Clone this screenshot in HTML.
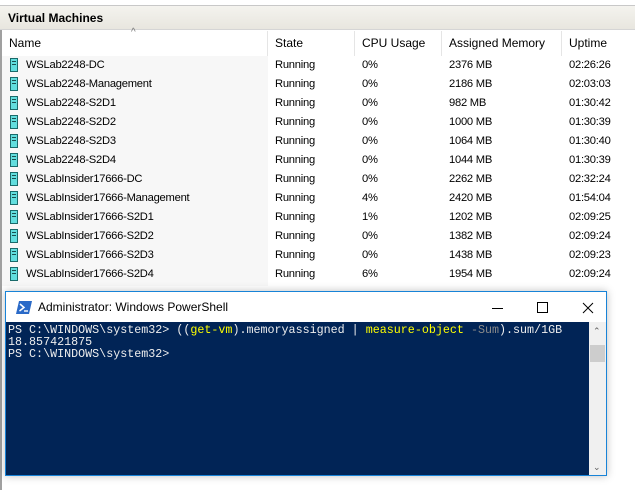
<!DOCTYPE html>
<html><head><style>
*{margin:0;padding:0;box-sizing:border-box}
body{width:635px;height:489px;background:#fff;position:relative;overflow:hidden;font-family:"Liberation Sans",sans-serif;font-size:12px;color:#000}
.top{position:absolute;left:0;top:0;width:635px;height:6px;background:#fff;border-bottom:1px solid #c8c8c8}
.title{position:absolute;left:0;top:6px;width:635px;height:24px;background:linear-gradient(#f4f3ee,#e8e6df);border-bottom:1px solid #d5d5d5;font-weight:bold;padding:5px 0 0 8px;font-size:12px}
.lb{position:absolute;left:0;top:30px;width:2px;height:460px;background:#a0a0a0}
.namebg{position:absolute;left:2px;top:56px;width:266px;height:230px;background:#f7f7f7}
.hdr{position:absolute;top:31px;height:25px;padding:5px 0 0 7px;font-size:12px;border-right:1px solid #e5e5e5}
.row{position:absolute;left:0;width:635px;height:19px;font-size:11.2px;letter-spacing:-0.25px}
.row span{position:absolute;top:3px}
.ic{position:absolute;left:10px;top:2px;width:8px;height:14px;background:#62dede;border:1px solid #1a6a6a}
.ic:before{content:"";position:absolute;left:1px;top:2px;width:4px;height:1px;background:#1a5050;box-shadow:0 3px 0 #1a5050}
.win{position:absolute;left:5px;top:291px;width:602px;height:185px;border:1px solid #1883d7;background:#fff;box-shadow:0 0 8px rgba(0,0,0,.25)}
.wt{position:absolute;left:0;top:0;width:600px;height:30px;font-size:12px}
.con{position:absolute;left:0;top:30px;width:583px;height:153px;background:#012456;font-family:"Liberation Mono",monospace;font-size:11.7px;color:#eee;line-height:12px;padding:2px 0 0 2px;white-space:pre}
.sb{position:absolute;left:583px;top:30px;width:17px;height:153px;background:#f0f0f0}
.y{color:#ffff00}.g{color:#8a8a8a}
</style></head><body>
<div class="top"></div>
<div class="title">Virtual Machines</div>
<div class="lb"></div>
<div class="namebg"></div>
<div class="hdr" style="left:2px;width:266px">Name</div>
<div style="position:absolute;left:131px;top:27px;font-size:10px;color:#777">^</div>
<div class="hdr" style="left:268px;width:87px">State</div>
<div class="hdr" style="left:355px;width:87px">CPU Usage</div>
<div class="hdr" style="left:442px;width:120px">Assigned Memory</div>
<div class="hdr" style="left:562px;width:66px;border-right:none">Uptime</div>
<div class="row" style="top:56px"><i class="ic"></i><span style="left:26px">WSLab2248-DC</span><span style="left:275px">Running</span><span style="left:362px">0%</span><span style="left:449px">2376 MB</span><span style="left:569px">02:26:26</span></div>
<div class="row" style="top:75px"><i class="ic"></i><span style="left:26px">WSLab2248-Management</span><span style="left:275px">Running</span><span style="left:362px">0%</span><span style="left:449px">2186 MB</span><span style="left:569px">02:03:03</span></div>
<div class="row" style="top:94px"><i class="ic"></i><span style="left:26px">WSLab2248-S2D1</span><span style="left:275px">Running</span><span style="left:362px">0%</span><span style="left:449px">982 MB</span><span style="left:569px">01:30:42</span></div>
<div class="row" style="top:113px"><i class="ic"></i><span style="left:26px">WSLab2248-S2D2</span><span style="left:275px">Running</span><span style="left:362px">0%</span><span style="left:449px">1000 MB</span><span style="left:569px">01:30:39</span></div>
<div class="row" style="top:132px"><i class="ic"></i><span style="left:26px">WSLab2248-S2D3</span><span style="left:275px">Running</span><span style="left:362px">0%</span><span style="left:449px">1064 MB</span><span style="left:569px">01:30:40</span></div>
<div class="row" style="top:151px"><i class="ic"></i><span style="left:26px">WSLab2248-S2D4</span><span style="left:275px">Running</span><span style="left:362px">0%</span><span style="left:449px">1044 MB</span><span style="left:569px">01:30:39</span></div>
<div class="row" style="top:170px"><i class="ic"></i><span style="left:26px">WSLabInsider17666-DC</span><span style="left:275px">Running</span><span style="left:362px">0%</span><span style="left:449px">2262 MB</span><span style="left:569px">02:32:24</span></div>
<div class="row" style="top:189px"><i class="ic"></i><span style="left:26px">WSLabInsider17666-Management</span><span style="left:275px">Running</span><span style="left:362px">4%</span><span style="left:449px">2420 MB</span><span style="left:569px">01:54:04</span></div>
<div class="row" style="top:208px"><i class="ic"></i><span style="left:26px">WSLabInsider17666-S2D1</span><span style="left:275px">Running</span><span style="left:362px">1%</span><span style="left:449px">1202 MB</span><span style="left:569px">02:09:25</span></div>
<div class="row" style="top:227px"><i class="ic"></i><span style="left:26px">WSLabInsider17666-S2D2</span><span style="left:275px">Running</span><span style="left:362px">0%</span><span style="left:449px">1382 MB</span><span style="left:569px">02:09:24</span></div>
<div class="row" style="top:246px"><i class="ic"></i><span style="left:26px">WSLabInsider17666-S2D3</span><span style="left:275px">Running</span><span style="left:362px">0%</span><span style="left:449px">1438 MB</span><span style="left:569px">02:09:23</span></div>
<div class="row" style="top:265px"><i class="ic"></i><span style="left:26px">WSLabInsider17666-S2D4</span><span style="left:275px">Running</span><span style="left:362px">6%</span><span style="left:449px">1954 MB</span><span style="left:569px">02:09:24</span></div>
<div class="win">
 <div class="wt">
  <svg style="position:absolute;left:10px;top:9px" width="16" height="13" viewBox="0 0 16 13"><path d="M3 0H16L13 13H0Z" fill="#2a6ac8"/><path d="M4 3L8 6.5L3.5 10" stroke="#fff" stroke-width="1.5" fill="none"/><path d="M8 10H12" stroke="#fff" stroke-width="1.4"/></svg>
  <span style="position:absolute;left:32px;top:8px">Administrator: Windows PowerShell</span>
  <svg style="position:absolute;left:480px;top:9px" width="110" height="14"><path d="M6 7.5H17" stroke="#000"/><path d="M51.5 1.5H61.5V11.5H51.5Z" stroke="#000" fill="none"/><path d="M97 2L107 12M107 2L97 12" stroke="#000"/></svg>
 </div>
 <div class="con">PS C:\WINDOWS\system32&gt; ((<span class="y">get-vm</span>).memoryassigned | <span class="y">measure-object</span> <span class="g">-Sum</span>).sum/1GB
18.857421875
PS C:\WINDOWS\system32&gt;</div>
 <div class="sb"><div style="position:absolute;left:1px;top:23px;width:15px;height:17px;background:#cdcdcd"></div><div style="position:absolute;left:4px;top:4px;font-size:9px;color:#606060">&#8963;</div><div style="position:absolute;left:4px;top:140px;font-size:9px;color:#606060">&#8964;</div></div>
</div>
</body></html>
